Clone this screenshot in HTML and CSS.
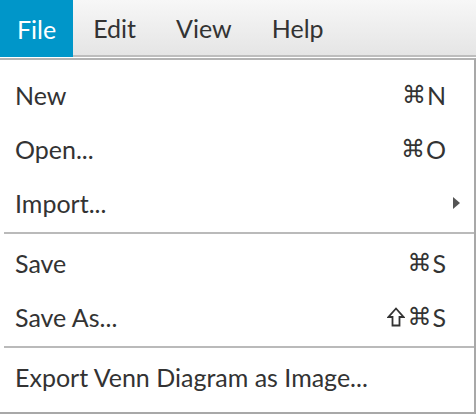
FILE: index.html
```html
<!DOCTYPE html>
<html>
<head>
<meta charset="utf-8">
<link rel="stylesheet" href="styles.css">
</head>
<body>
<div class="menubar">
  <div class="menu active">File</div>
  <div class="menu">Edit</div>
  <div class="menu">View</div>
  <div class="menu">Help</div>
</div>
<div class="popup">
  <div class="item"><span class="label">New</span><span class="accel"><span class="cmd">⌘</span>N</span></div>
  <div class="item"><span class="label">Open...</span><span class="accel"><span class="cmd">⌘</span>O</span></div>
  <div class="item submenu"><span class="label">Import...</span><span class="arrow"></span></div>
  <div class="sep"></div>
  <div class="item"><span class="label">Save</span><span class="accel"><span class="cmd">⌘</span>S</span></div>
  <div class="item"><span class="label">Save As...</span><span class="accel"><svg class="shift" width="18" height="20" viewBox="0 0 18 20"><path d="M9 1.5 L16.5 10 L12.5 10 L12.5 18.5 L5.5 18.5 L5.5 10 L1.5 10 Z" fill="none" stroke="#333" stroke-width="1.8" stroke-linejoin="miter"/></svg><span class="cmd">⌘</span>S</span></div>
  <div class="sep"></div>
  <div class="item"><span class="label">Export Venn Diagram as Image...</span></div>
</div>
</body>
</html>
```

FILE: styles.css
```css
html, body {
  margin: 0;
  padding: 0;
  background: #ffffff;
}
body {
  font-family: Lato, "Open Sans", "DejaVu Sans", sans-serif;
  font-size: 25px;
  color: #333333;
  overflow: hidden;
  width: 476px;
  height: 414px;
}
.menubar {
  display: flex;
  height: 55px;
  background: linear-gradient(to bottom, #f7f7f7, #e5e5e5);
  border-bottom: 2px solid #bdbdbd;
}
.menu {
  display: flex;
  align-items: center;
  padding: 0 20px;
  height: 55px;
}
.menu.active {
  background: #0096c9;
  color: #ffffff;
  height: 57px;
  padding: 0 17px 0 17px;
}
.popup {
  margin-top: 1px;
  margin-left: -2px;
  width: 474px;
  border: 2px solid #b3b3b3;
  border-right-color: #a8a8a8;
  border-bottom-color: #a8a8a8;
  background: #ffffff;
  padding: 8px 0;
}
.item {
  display: flex;
  align-items: center;
  justify-content: space-between;
  height: 54px;
  padding: 0 28px 0 15px;
}
.item.submenu {
  padding-right: 14px;
}
.accel {
  display: flex;
  align-items: center;
  color: #333333;
}
.cmd {
  font-family: "DejaVu Sans", sans-serif;
  font-size: 24px;
  margin-right: 1px;
}
.shift {
  display: block;
  margin-right: 2px;
}
.arrow {
  width: 0;
  height: 0;
  border-top: 6px solid transparent;
  border-bottom: 6px solid transparent;
  border-left: 7px solid #555555;
}
.sep {
  height: 2px;
  background: #bababa;
  margin: 2px 0 2px 4px;
}
```
